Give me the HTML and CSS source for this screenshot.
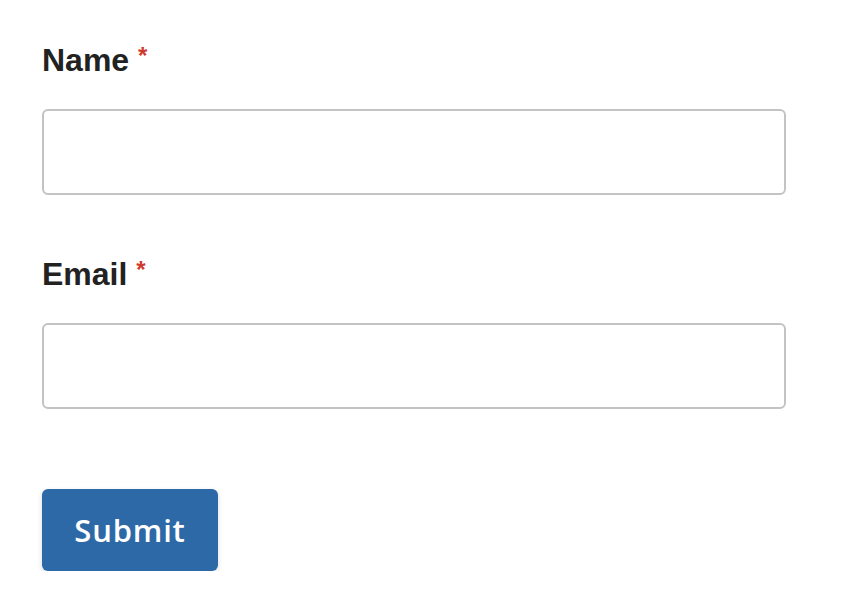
FILE: index.html
```html
<!DOCTYPE html>
<html lang="en">
<head>
  <meta charset="UTF-8" />
  <title>Contact form</title>
  <meta name="viewport" content="width=device-width, initial-scale=1.0"/>
  <link rel="stylesheet" href="styles.css">
</head>
<body>

<form class="contact-form">
  <div class="field">
    <label class="field-label" for="name">Name <span class="required">*</span></label>
    <input class="field-input" type="text" id="name">
  </div>

  <div class="field">
    <label class="field-label" for="email">Email <span class="required">*</span></label>
    <input class="field-input" type="email" id="email">
  </div>

  <button class="submit-button" type="button">Submit</button>
</form>

</body>
</html>
```

FILE: styles.css
```css
body {
  margin: 0;
  font-family: 'Liberation Sans', Arial, sans-serif;
  background-color: #fff;
  color: #222;
}

.contact-form {
  width: 744px;
  padding: 42px 0 0 42px;
}

.field {
  margin-bottom: 61px;
}

.field-label {
  display: block;
  font-size: 32px;
  font-weight: bold;
  line-height: 36px;
  margin-bottom: 31px;
}

.required {
  color: #d0392e;
  font-size: 24px;
  font-weight: bold;
  vertical-align: top;
  line-height: 24px;
  position: relative;
  top: 2px;
}

.field-input {
  display: block;
  box-sizing: border-box;
  width: 100%;
  height: 86px;
  border: 2px solid #c3c3c3;
  border-radius: 6px;
  background: #fff;
  font-size: 24px;
  padding: 0 16px;
  margin: 0;
}

.field:last-of-type {
  margin-bottom: 80px;
}

.submit-button {
  display: block;
  width: 176px;
  height: 82px;
  padding: 0;
  border: none;
  border-radius: 6px;
  background-color: #2e69a7;
  color: #fff;
  font-family: 'Open Sans', sans-serif;
  font-size: 31px;
  font-weight: 600;
  letter-spacing: 0.8px;
  box-shadow: 0 2px 5px rgba(0, 0, 0, 0.15);
  cursor: pointer;
}
```
